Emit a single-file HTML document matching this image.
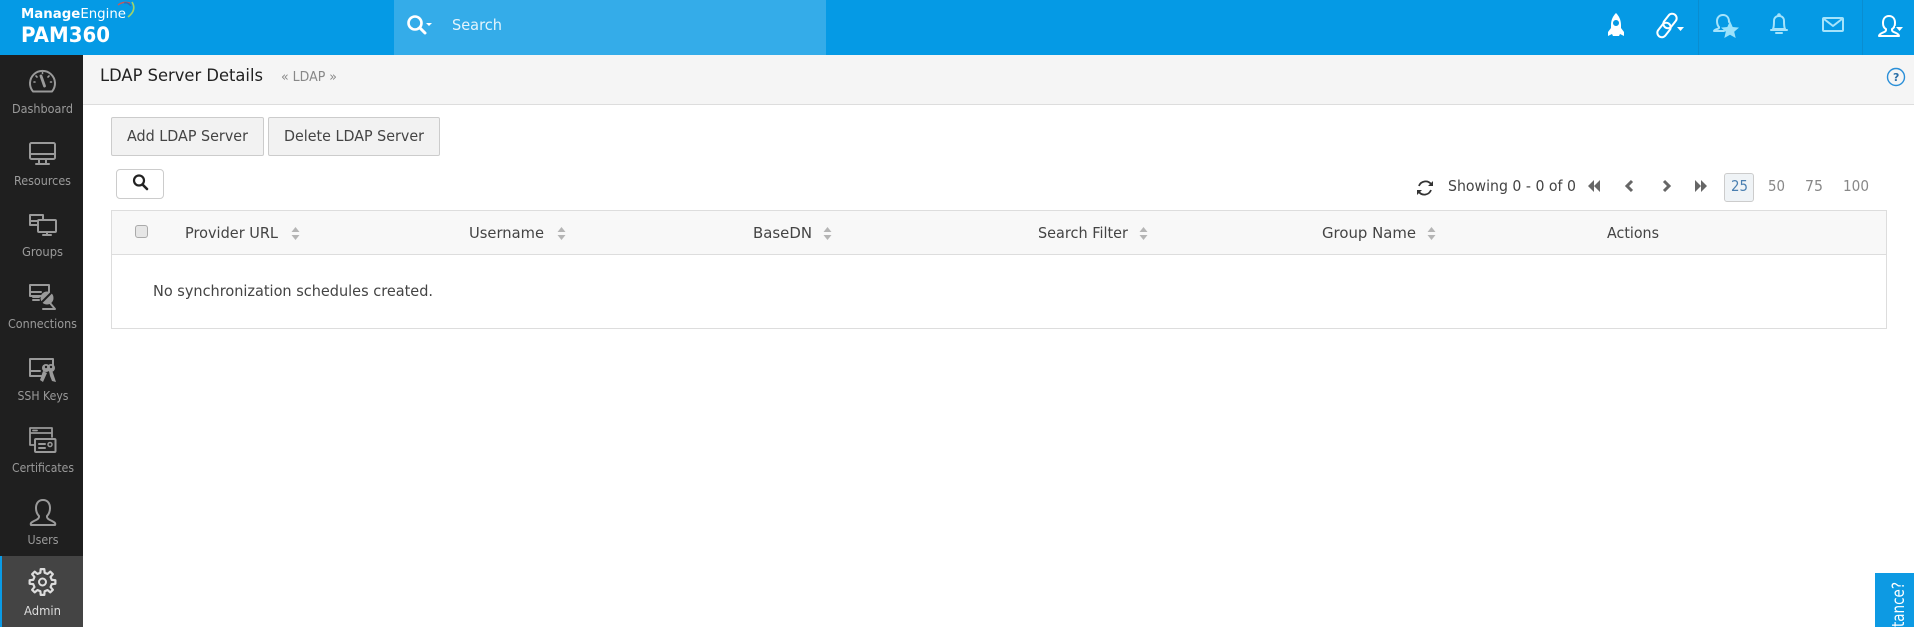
<!DOCTYPE html>
<html lang="en"><head><meta charset="utf-8"><title>LDAP Server Details</title>
<style>
html,body{margin:0;padding:0;width:1914px;height:627px;overflow:hidden;background:#fff}
div{position:absolute;box-sizing:border-box}
svg{position:absolute;left:0;top:0;overflow:hidden}
text{font-family:"DejaVu Sans","Liberation Sans",sans-serif;white-space:pre}
.n text{font-size:12.5px;fill:#9a9a9a}
.h text{font-size:15px;fill:#444}
.i{fill:none;stroke:#9a9a9a;stroke-width:2;stroke-linejoin:round;stroke-linecap:round}
.w{fill:none;stroke:#fff;stroke-width:2;stroke-linejoin:round;stroke-linecap:round}
.l{fill:none;stroke:#a5e3fb;stroke-width:2;stroke-linejoin:round;stroke-linecap:round}
</style></head><body>
<div style="left:0;top:0;width:1914px;height:55px;background:#059ae5"></div>
<div style="left:394px;top:0;width:432px;height:55px;background:#34ace9"></div>
<div style="left:1698px;top:0;width:1px;height:55px;background:#0a8dd0"></div>
<div style="left:1862px;top:0;width:1px;height:55px;background:#0a8dd0"></div>
<div style="left:0;top:55px;width:83px;height:572px;background:#1f1f1f"></div>
<div style="left:0;top:556px;width:83px;height:71px;background:#444;border-left:2px solid #0a9be6"></div>
<div style="left:83px;top:55px;width:1831px;height:50px;background:#f5f5f5;border-bottom:1px solid #ddd"></div>
<div style="left:111px;top:117px;width:153px;height:39px;background:#f2f2f2;border:1px solid #ccc;border-radius:2px"></div>
<div style="left:268px;top:117px;width:172px;height:39px;background:#f2f2f2;border:1px solid #ccc;border-radius:2px"></div>
<div style="left:116px;top:169px;width:48px;height:30px;background:#fff;border:1px solid #ccc;border-radius:4px"></div>
<div style="left:111px;top:210px;width:1776px;height:119px;background:#fff;border:1px solid #ddd"></div>
<div style="left:112px;top:211px;width:1774px;height:44px;background:#f8f8f8;border-bottom:1px solid #ddd"></div>
<div style="left:135px;top:225px;width:13px;height:13px;background:#e6e6e6;border:1px solid #aaa;border-radius:3px"></div>
<div style="left:1724px;top:173px;width:30px;height:29px;background:#eff3f6;border:1px solid #ccc;border-radius:3px"></div>
<div style="left:1875px;top:573px;width:39px;height:54px;background:#0d9ae3"></div>

<svg width="1914" height="627" viewBox="0 0 1914 627" xmlns="http://www.w3.org/2000/svg">
<!-- logo -->
<text x="21" y="18" font-size="13.500" fill="#fff" textLength="105" lengthAdjust="spacingAndGlyphs"><tspan font-weight="bold">Manage</tspan>Engine</text>
<text x="21" y="42" font-size="21" font-weight="bold" fill="#fff" textLength="89" lengthAdjust="spacingAndGlyphs">PAM360</text>
<path d="M118 5Q123 1 130 3" fill="none" stroke="#d9534f" stroke-width="1.400"/>
<path d="M124 3Q128 2 131 6" fill="none" stroke="#2a6fb5" stroke-width="1.400"/>
<path d="M132 2Q137 10 128 17" fill="none" stroke="#9fd36a" stroke-width="1.600"/>
<!-- search -->
<circle cx="415" cy="23" r="6.500" fill="none" stroke="#fff" stroke-width="2.600"/>
<path d="M420 28l5 5" stroke="#fff" stroke-width="3" stroke-linecap="round"/>
<path d="M426 23h6l-3 3z" fill="#fff"/>
<text x="452" y="30" font-size="15" fill="#e4f4fc" textLength="50" lengthAdjust="spacingAndGlyphs">Search</text>

<!-- top right icons -->
<path fill-rule="evenodd" fill="#fff" d="M1616 13c3 3 5 7 5 12v3l3 4v4l-4-2-1 2h-6l-1-2-4 2v-4l3-4v-3c0-5 2-9 5-12zM1616 20a3 3 0 1 0 .01 0z"/>
<g class="w" stroke-width="2">
<rect x="-4.500" y="-8" width="9" height="16" rx="4.500" transform="translate(1670 21) rotate(38)"/>
<rect x="-4.500" y="-8" width="9" height="16" rx="4.500" transform="translate(1664 30) rotate(38)"/>
</g>
<path d="M1677 27h7l-3.500 4z" fill="#fff"/>
<g class="l"><path d="M1723 15c-4 0-6 3-6 6 0 3 1 5 2 6v1c0 1-4 1-5 3h10"/><path d="M1723 15c4 0 6 3 6 7"/></g>
<path d="M1730 21l2.700 6 6.300.6-4.800 4.200 1.500 6.200-5.700-3.300-5.700 3.300 1.500-6.200-4.800-4.200 6.300-.6z" fill="#9be2fb"/>
<g class="l"><path d="M1773 29c1-2 1-4 1-8 0-3 2-5 5-5s5 2 5 5c0 4 0 6 1 8z"/><path d="M1771 30h16M1776 33h6"/><circle cx="1779" cy="15" r=".8"/></g>
<g class="l"><rect x="1823" y="18" width="20" height="13" rx="1"/><path d="M1824 19l9 7 9-7"/></g>
<path class="w" d="M1889 16c-4 0-6 3-6 7 0 3 1 5 3 6v1c0 2-2 2-4 3-2 1-3 2-3 3h20c0-1-1-2-3-3s-4-1-4-3v-1c2-1 3-3 3-6 0-4-2-7-6-7z"/>
<path d="M1896 27h7l-3.500 4z" fill="#fff"/><path d="M1895 26h9v1h-9z" fill="#059ae5"/>
<circle cx="1896" cy="77" r="8.500" fill="none" stroke="#2a8fd8" stroke-width="1.400"/>
<text x="1893" y="81" font-size="11" font-weight="bold" fill="#2a6fa8">?</text>

<!-- sidebar icons -->
<g class="i">
<!-- gauge -->
<path d="M33 91.500a12.500 12.500 0 1 1 19 0z"/><path d="M41 76l3.500 10" stroke-width="2.800"/><path d="M42.500 72.500v1M34 82h1M50.500 82h1M36 76l1 1M49 76l-1 1" stroke-width="1.600"/>
<!-- monitor -->
<rect x="30" y="143" width="25" height="16" rx="1.500"/><path d="M30.500 154h24M39 159v4M46 159v4M36 164h13"/>
<!-- groups -->
<path d="M37 225h-7v-10h13v4M31 221h6"/><rect x="38" y="220" width="18" height="12" rx="1"/><path d="M47 232v2M43 235h8"/>
<!-- connections -->
<path d="M43 296h-13v-11h19v7M31 292h10M33 297h6M33 300h6"/>
<circle cx="47" cy="298" r="6.500" fill="#9a9a9a" stroke="none"/><path d="M41 303l10-10" stroke="#1f1f1f"/><path d="M50 303l5 6H43"/>
<!-- ssh keys -->
<path d="M41 376h-11v-17h23v6M31 371h9"/>
<!-- certificates -->
<path d="M34 445h-4v-17h22v9M31 433h20M33 430.500h4" stroke-width="1.800"/><rect x="35" y="439" width="20.500" height="13" rx="1"/><path d="M39 444h6M39 448h6"/><circle cx="50" cy="444.500" r="2" stroke-width="1.500"/>
<!-- users -->
<path d="M43 500c-5 0-7 4-7 8 0 4 1 6 3 8v1c0 2-3 3-5 4s-4 2-3 4h24c1-2-1-3-3-4s-5-2-5-4v-1c2-2 3-4 3-8 0-4-2-8-7-8z"/>
</g>
<!-- keys fill -->
<g fill="#9a9a9a"><circle cx="46" cy="368" r="4"/><circle cx="51" cy="368" r="4"/><path d="M43 371l4 2-4 9-3-2zM49 371l3-1 4 12-4-1-2-5z"/></g>
<circle cx="46" cy="367" r="1.200" fill="#1f1f1f"/><circle cx="51" cy="367" r="1.200" fill="#1f1f1f"/>
<!-- gear -->
<g transform="translate(42.500 582)">
<path fill="none" stroke="#ddd" stroke-width="2.200" stroke-linejoin="round" d="M-2.140-9.260L-1.810-12.870 1.810-12.870 2.140-9.260 5.030-8.060 7.820-10.380 10.380-7.820 8.060-5.030 9.260-2.140 12.870-1.810 12.870 1.810 9.260 2.140 8.060 5.030 10.380 7.820 7.820 10.380 5.030 8.060 2.140 9.260 1.810 12.870-1.810 12.870-2.140 9.260-5.030 8.060-7.820 10.380-10.380 7.820-8.060 5.030-9.260 2.140-12.870 1.810-12.870-1.810-9.260-2.140-8.060-5.030-10.380-7.820-7.820-10.380-5.030-8.060z"/>
<circle r="3.500" fill="none" stroke="#ddd" stroke-width="2"/>
</g>

<!-- sidebar labels -->
<g class="n">
<text x="12" y="113" textLength="61" lengthAdjust="spacingAndGlyphs">Dashboard</text>
<text x="14" y="185" textLength="57" lengthAdjust="spacingAndGlyphs">Resources</text>
<text x="22" y="256" textLength="41" lengthAdjust="spacingAndGlyphs">Groups</text>
<text x="8" y="328" textLength="69" lengthAdjust="spacingAndGlyphs">Connections</text>
<text x="17.500" y="400" textLength="51" lengthAdjust="spacingAndGlyphs">SSH Keys</text>
<text x="12" y="472" textLength="62" lengthAdjust="spacingAndGlyphs">Certificates</text>
<text x="27.500" y="544" textLength="31" lengthAdjust="spacingAndGlyphs">Users</text>
<text x="24" y="615" textLength="37" lengthAdjust="spacingAndGlyphs" style="fill:#ddd">Admin</text>
</g>

<!-- page heading -->
<text x="100" y="81" font-size="17" fill="#222" textLength="163" lengthAdjust="spacingAndGlyphs">LDAP Server Details</text>
<text x="281" y="81" font-size="13" fill="#888" textLength="56" lengthAdjust="spacingAndGlyphs">« LDAP »</text>

<!-- buttons -->
<g class="h">
<text x="127" y="141" textLength="121" lengthAdjust="spacingAndGlyphs">Add LDAP Server</text>
<text x="284" y="141" textLength="140" lengthAdjust="spacingAndGlyphs">Delete LDAP Server</text>
</g>
<circle cx="139" cy="180.500" r="5" fill="none" stroke="#222" stroke-width="2.200"/>
<path d="M143 185l4 4" stroke="#222" stroke-width="2.600" stroke-linecap="round"/>

<!-- table header -->
<g class="h">
<text x="185" y="238" textLength="93" lengthAdjust="spacingAndGlyphs">Provider URL</text>
<text x="469" y="238" textLength="75" lengthAdjust="spacingAndGlyphs">Username</text>
<text x="753" y="238" textLength="59" lengthAdjust="spacingAndGlyphs">BaseDN</text>
<text x="1038" y="238" textLength="90" lengthAdjust="spacingAndGlyphs">Search Filter</text>
<text x="1322" y="238" textLength="94" lengthAdjust="spacingAndGlyphs">Group Name</text>
<text x="1607" y="238" textLength="52" lengthAdjust="spacingAndGlyphs">Actions</text>
<text x="153" y="296" textLength="280" lengthAdjust="spacingAndGlyphs">No synchronization schedules created.</text>
</g>
<g fill="#b5b5b5">
<path id="s" d="M291.500 232l4-5 4 5zM291.500 235l4 5 4-5z"/>
<use href="#s" x="266"/><use href="#s" x="532"/><use href="#s" x="848"/><use href="#s" x="1136"/>
</g>

<!-- pagination -->
<g fill="none" stroke="#333" stroke-width="1.800">
<path d="M1431 184a7 7 0 0 0-12 2M1419 192a7 7 0 0 0 12-2"/>
</g>
<path d="M1428 186l5 0 0-5zM1422 190l-5 0 0 5z" fill="#333"/>
<text x="1448" y="191" font-size="15" fill="#444" textLength="128" lengthAdjust="spacingAndGlyphs">Showing 0 - 0 of 0</text>
<g fill="#666">
<path d="M1594 180v12l-6-6zM1600 180v12l-6-6z"/>
<path d="M1695 180v12l6-6zM1701 180v12l6-6z"/>
</g>
<g fill="none" stroke="#666" stroke-width="3">
<path d="M1632 181l-5 5 5 5"/>
<path d="M1664 181l5 5-5 5"/>
</g>
<text x="1731" y="191" font-size="15" fill="#4a7fb0" textLength="17" lengthAdjust="spacingAndGlyphs">25</text>
<g font-size="15" fill="#888">
<text x="1768" y="191" textLength="17" lengthAdjust="spacingAndGlyphs">50</text>
<text x="1805" y="191" textLength="18" lengthAdjust="spacingAndGlyphs">75</text>
<text x="1843" y="191" textLength="26" lengthAdjust="spacingAndGlyphs">100</text>
</g>

<!-- assistance tab -->
<text transform="translate(1904 582) rotate(-90)" text-anchor="end" font-size="17" fill="#fff" textLength="45" lengthAdjust="spacingAndGlyphs">tance?</text>
</svg>
</body></html>
